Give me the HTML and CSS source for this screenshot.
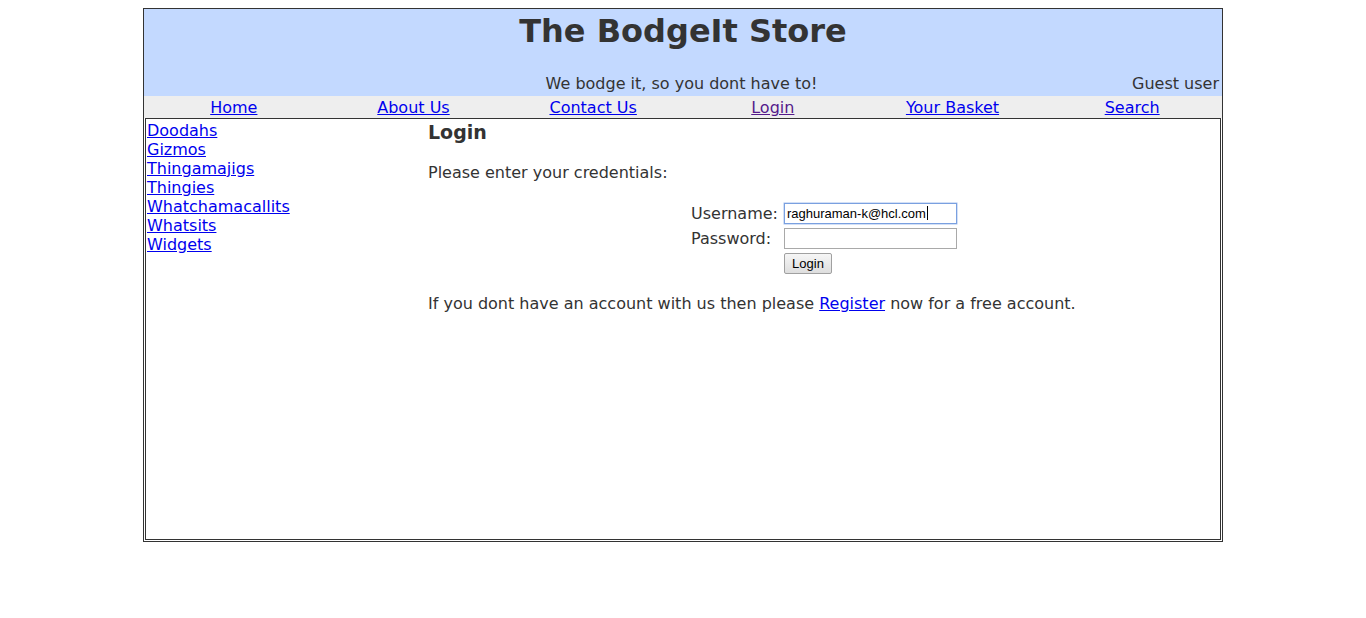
FILE: index.html
```html
<!DOCTYPE html>
<html>
<head>
<meta charset="utf-8">
<title>The BodgeIt Store</title>
<link rel="stylesheet" href="styles.css">
</head>
<body>
<div class="page">
  <div class="header">
    <h1 class="title">The BodgeIt Store</h1>
    <div class="subrow">
      <div class="sub-side"></div>
      <div class="sub-mid">We bodge it, so you dont have to!</div>
      <div class="sub-side sub-user">Guest user</div>
    </div>
  </div>
  <div class="nav">
    <a href="#home">Home</a>
    <a href="#about">About Us</a>
    <a href="#contact">Contact Us</a>
    <a href="#login" class="visited">Login</a>
    <a href="#basket">Your Basket</a>
    <a href="#search">Search</a>
  </div>
  <div class="content">
    <div class="sidebar">
      <a href="#1">Doodahs</a>
      <a href="#2">Gizmos</a>
      <a href="#3">Thingamajigs</a>
      <a href="#4">Thingies</a>
      <a href="#5">Whatchamacallits</a>
      <a href="#6">Whatsits</a>
      <a href="#7">Widgets</a>
    </div>
    <div class="main">
      <h3 class="heading">Login</h3>
      <p class="intro">Please enter your credentials:</p>
      <div class="form">
        <div class="label">Username:</div>
        <div class="field">
          <span class="input focused">raghuraman-k@hcl.com<span class="caret"></span></span>
        </div>
        <div class="label">Password:</div>
        <div class="field"><span class="input"></span></div>
        <div class="label"></div>
        <div class="field"><button class="btn" type="button">Login</button></div>
      </div>
      <p class="register">If you dont have an account with us then please <a href="#register">Register</a> now for a free account.</p>
    </div>
  </div>
</div>
</body>
</html>
```
FILE: styles.css
```css
html, body {
  margin: 0;
  padding: 0;
  background: #fff;
}
body {
  padding: 8px 0;
  font-family: "DejaVu Sans", Verdana, sans-serif;
  font-size: 16px;
  color: #333;
}
a {
  color: #0000ee;
  text-decoration: underline;
}
a.visited {
  color: #551a8b;
}
.page {
  width: 1078px;
  margin: 0 auto;
  border: 1px solid #333;
}
.header {
  background: #c3d9ff;
  height: 87px;
  display: flex;
  flex-direction: column;
}
.title {
  margin: 0;
  padding-top: 3px;
  font-size: 32px;
  line-height: 38px;
  font-weight: bold;
  text-align: center;
  color: #333;
}
.subrow {
  margin-top: auto;
  display: flex;
  line-height: 19px;
  padding-bottom: 3px;
}
.sub-side {
  flex: 0 0 30%;
}
.sub-mid {
  flex: 1;
  text-align: center;
}
.sub-user {
  text-align: right;
  padding-right: 3px;
}
.nav {
  background: #eeeeee;
  height: 22px;
  display: grid;
  grid-template-columns: repeat(6, 1fr);
  align-items: center;
  text-align: center;
  line-height: 19px;
  padding-top: 1px;
  box-sizing: border-box;
}
.content {
  margin: 0 1px 1px 1px;
  border: 1px solid #333;
  height: 420px;
  display: flex;
}
.sidebar {
  width: 280px;
  display: flex;
  flex-direction: column;
  align-items: flex-start;
  padding: 2px 0 0 1px;
  line-height: 19px;
}
.main {
  flex: 1;
  padding: 2px 2px 0 1px;
}
.heading {
  margin: 0;
  font-size: 19px;
  line-height: 22px;
  font-weight: bold;
}
.intro {
  margin: 20px 0 0 0;
  line-height: 19px;
}
.form {
  display: grid;
  grid-template-columns: auto auto;
  justify-content: center;
  column-gap: 6px;
  row-gap: 4px;
  margin-top: 21px;
  align-items: center;
}
.label {
  line-height: 19px;
  padding-left: 2px;
}
.field {
  display: flex;
}
.input {
  position: relative;
  display: block;
  box-sizing: border-box;
  width: 173px;
  height: 21px;
  border: 1px solid #a9a9a9;
  background: #fff;
  font-family: "Liberation Sans", Arial, sans-serif;
  font-size: 13px;
  line-height: 19px;
  padding: 0 2px;
  color: #000;
  white-space: nowrap;
}
.input.focused {
  border-color: #7aa0e0;
  box-shadow: 0 0 0 0.5px #a8c2ee;
}
.caret {
  display: inline-block;
  width: 1px;
  height: 14px;
  background: #000;
  vertical-align: -2px;
  margin-left: 1px;
}
.btn {
  font-family: "Liberation Sans", Arial, sans-serif;
  font-size: 13px;
  height: 21px;
  width: 48px;
  padding: 0;
  color: #000;
  border: 1px solid #a0a0a0;
  border-radius: 2px;
  background: linear-gradient(#f6f6f6, #dedede);
}
.register {
  margin: 20px 0 0 0;
  line-height: 19px;
}
```
